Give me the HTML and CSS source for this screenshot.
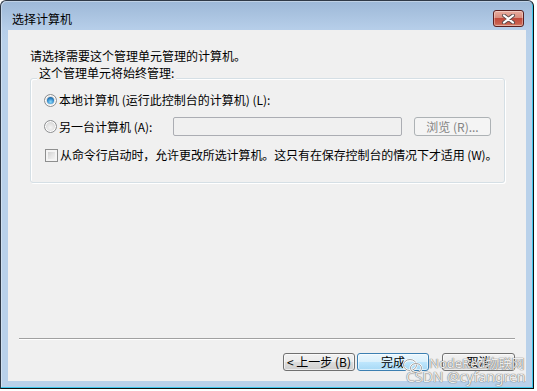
FILE: index.html
```html
<!DOCTYPE html>
<html lang="zh-CN">
<head>
<meta charset="utf-8">
<title>选择计算机</title>
<link rel="stylesheet" href="styles.css">
</head>
<body>
<div class="window">
  <div class="titlebar">
    <span class="title">选择计算机</span>
    <div class="close">
      <svg width="15" height="10" viewBox="0 0 15 10">
        <path d="M3 1.5 L12 8.5 M12 1.5 L3 8.5" stroke="#5b4a4a" stroke-width="4" stroke-linecap="round"/>
        <path d="M3 1.5 L12 8.5 M12 1.5 L3 8.5" stroke="#ffffff" stroke-width="2.2" stroke-linecap="round"/>
      </svg>
    </div>
  </div>
  <div class="client">
    <p class="intro">请选择需要这个管理单元管理的计算机。</p>
    <div class="group">
      <span class="legend">这个管理单元将始终管理:</span>
      <div class="row">
        <span class="radio checked"></span>
        <span class="label">本地计算机 (运行此控制台的计算机) (L):</span>
      </div>
      <div class="row row2">
        <div class="opt">
          <span class="radio"></span>
          <span class="label">另一台计算机 (A):</span>
        </div>
        <div class="input"></div>
        <div class="btn disabled">浏览 (R)...</div>
      </div>
      <div class="row row3">
        <span class="check"></span>
        <span class="label">从命令行启动时，允许更改所选计算机。这只有在保存控制台的情况下才适用 (W)。</span>
      </div>
    </div>
    <div class="spacer"></div>
    <div class="sep"></div>
    <div class="buttons">
      <div class="btn back">&lt;&nbsp;上一步 (B)</div>
      <div class="btn default">完成</div>
      <div class="btn cancel">取消</div>
    </div>
  </div>
  <div class="watermark">
    <svg class="wm-icon" width="22" height="18" viewBox="0 0 22 18">
      <ellipse cx="8" cy="8" rx="6.5" ry="5.5" fill="none" stroke="#ffffff" stroke-width="2.2"/>
      <ellipse cx="8" cy="8" rx="6.5" ry="5.5" fill="none" stroke="#8a8a8a" stroke-width="0.8"/>
      <ellipse cx="14" cy="11" rx="5.5" ry="4.5" fill="none" stroke="#ffffff" stroke-width="2.2"/>
      <ellipse cx="14" cy="11" rx="5.5" ry="4.5" fill="none" stroke="#8a8a8a" stroke-width="0.8"/>
    </svg>
    <span class="wm-line1">NodeRed物联网</span>
    <span class="wm-line2">CSDN @cyfangren</span>
  </div>
</div>
</body>
</html>
```

FILE: styles.css
```css
html, body {
  margin: 0;
  padding: 0;
}
body {
  width: 537px;
  height: 391px;
  overflow: hidden;
  background: #ffffff;
  font-family: "Noto Sans CJK SC", "Noto Sans", sans-serif;
  font-size: 12px;
  line-height: 16px;
  color: #000;
}
.window {
  position: relative;
  box-sizing: border-box;
  width: 534px;
  height: 389px;
  border: 1px solid #2f3946;
  border-bottom-color: #101010;
  border-right-color: #101010;
  border-radius: 6px 6px 0 0;
  padding: 0 7px 7px 7px;
  background: linear-gradient(to bottom, #9db8d7 0px, #b6cee9 28px, #b9d1ea 40px);
  box-shadow: inset -1px -1px 0 #3cc7ec, inset 1px 1px 0 rgba(255,255,255,0.35);
  display: flex;
  flex-direction: column;
}
.titlebar {
  height: 29px;
  display: flex;
  align-items: flex-start;
  justify-content: space-between;
  flex: none;
}
.title {
  margin-top: 10px;
  margin-left: 4px;
  color: #000;
}
.close {
  margin-top: 9px;
  margin-right: 2px;
  box-sizing: border-box;
  width: 31px;
  height: 17px;
  border: 1px solid #5a1f1f;
  border-radius: 3px;
  background: linear-gradient(to bottom, #e9ad9f 0%, #d98d7e 45%, #c24a3b 50%, #c9604e 85%, #d98a72 100%);
  box-shadow: inset 0 0 0 1px rgba(255,255,255,0.35);
  display: flex;
  align-items: center;
  justify-content: center;
}
.client {
  flex: 1;
  background: #f0f0f0;
  display: flex;
  flex-direction: column;
  padding: 18px 0 10px 0;
}
.intro {
  margin: 0 0 0 22px;
}
.group {
  position: relative;
  margin: 14px 0 0 22px;
  width: 475px;
  box-sizing: border-box;
  border: 1px solid #d5dfe5;
  border-radius: 3px;
  box-shadow: inset 1px 1px 0 #ffffff, 1px 1px 0 #ffffff;
  padding: 13px 0 19px 13px;
}
.legend {
  position: absolute;
  top: -14px;
  left: 6px;
  padding: 0 2px;
  background: #f0f0f0;
}
.row {
  display: flex;
  align-items: center;
  height: 16px;
}
.row2 {
  height: 19px;
  margin-top: 9px;
}
.row3 {
  margin-top: 11px;
}
.row3 .label {
  letter-spacing: -0.1px;
}
.opt {
  width: 129px;
  flex: none;
  display: flex;
  align-items: center;
}
.radio {
  box-sizing: border-box;
  width: 13px;
  height: 13px;
  flex: none;
  border-radius: 50%;
  border: 1px solid #8d8f91;
  background: radial-gradient(circle at 50% 60%, #f4f4f4 0%, #dcdcdc 55%, #c8c8c8 100%);
  box-shadow: inset 0 0 0 1px #ffffff;
  display: flex;
  align-items: center;
  justify-content: center;
  margin-right: 2px;
}
.radio.checked::after {
  content: "";
  width: 7px;
  height: 7px;
  border-radius: 50%;
  background: radial-gradient(circle at 50% 70%, #8fdcfb 0%, #2f86c8 55%, #194a78 100%);
}
.check {
  box-sizing: border-box;
  width: 13px;
  height: 13px;
  flex: none;
  margin-left: 1px;
  margin-right: 2px;
  border: 1px solid #8e8f8f;
  background: linear-gradient(135deg, #c6c6c6 0%, #e4e4e4 50%, #fbfbfb 100%);
  box-shadow: inset 0 0 0 2px #f4f4f4;
}
.input {
  box-sizing: border-box;
  width: 229px;
  height: 19px;
  flex: none;
  border: 1px solid #abadb3;
  border-radius: 2px;
  background: #f0f0f0;
  margin-right: 12px;
}
.btn {
  box-sizing: border-box;
  height: 18px;
  flex: none;
  border: 1px solid #707070;
  border-radius: 3px;
  background: linear-gradient(to bottom, #f2f2f2 0%, #ebebeb 50%, #dddddd 51%, #cfcfcf 100%);
  box-shadow: inset 0 0 0 1px rgba(255,255,255,0.6);
  display: flex;
  align-items: center;
  justify-content: center;
  line-height: 16px;
}
.row2 .btn {
  width: 77px;
  height: 19px;
}
.btn.disabled {
  border-color: #adb2b5;
  background: #f4f4f4;
  color: #838383;
  box-shadow: none;
}
.spacer {
  flex: 1;
}
.sep {
  margin: 0 11px;
  height: 0;
  border-top: 1px solid #a0a0a0;
  border-bottom: 1px solid #ffffff;
}
.buttons {
  margin-top: 13px;
  padding-right: 11px;
  display: flex;
  justify-content: flex-end;
}
.back {
  width: 72px;
}
.default {
  width: 72px;
  margin-left: 2px;
  border-color: #3c7fb1;
  background: linear-gradient(to bottom, #eaf6fd 0%, #d9f0fc 50%, #bee6fd 51%, #a7d9f5 100%);
  box-shadow: inset 0 0 0 1px rgba(255,255,255,0.55);
}
.cancel {
  width: 73px;
  margin-left: 13px;
}
.watermark {
  position: absolute;
  left: 401px;
  top: 352px;
  width: 122px;
  height: 32px;
  pointer-events: none;
}
.wm-icon {
  position: absolute;
  left: 0;
  top: 4px;
}
.wm-line1, .wm-line2 {
  position: absolute;
  white-space: nowrap;
  font-family: "Noto Sans", "Noto Sans CJK SC", sans-serif;
  color: rgba(255,255,255,0.88);
  text-shadow: 0 0 1px #6b6b6b, 0 0 1px #6b6b6b;
}
.wm-line1 {
  left: 27px;
  top: 3px;
  font-size: 13px;
  line-height: 14px;
}
.wm-line2 {
  left: 4px;
  top: 16px;
  font-size: 14px;
  line-height: 15px;
}
```
